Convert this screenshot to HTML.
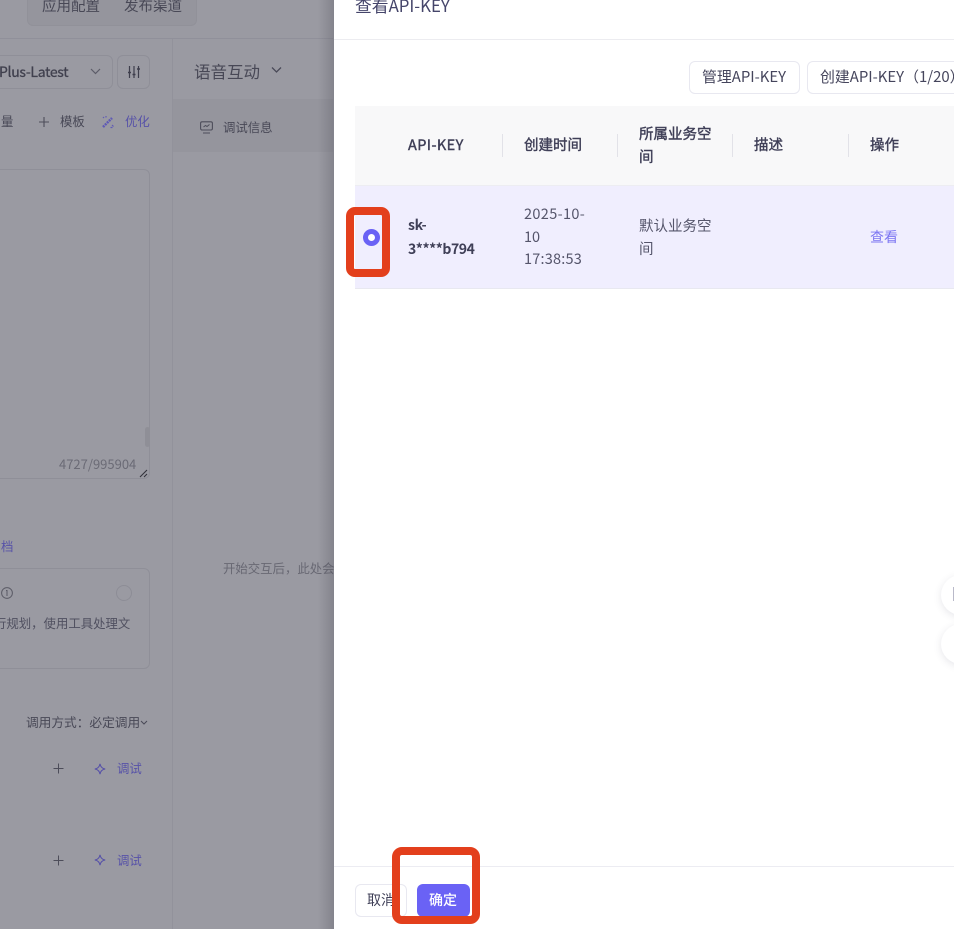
<!DOCTYPE html>
<html lang="zh-CN">
<head>
<meta charset="utf-8">
<style>
html,body{margin:0;padding:0;}
body{width:954px;height:929px;overflow:hidden;position:relative;background:#99999f;font-family:"Liberation Sans","Noto Sans CJK SC",sans-serif;}
#w{position:absolute;left:0;top:0;width:954px;height:929px;overflow:hidden;background:#9a9aa2;filter:blur(.35px);}
.t{position:absolute;white-space:nowrap;font-family:"Noto Sans CJK SC","Liberation Sans",sans-serif;}
.b{position:absolute;box-sizing:border-box;}
svg{position:absolute;overflow:visible;}
.g{color:#484856;}
.p{color:#5752a8;}
.h{color:#3f3f57;font-size:14.5px;line-height:22px;-webkit-text-stroke:.4px #3f3f57;}
.c{color:#55556b;font-size:14.5px;line-height:22px;}
.s{font-size:12.4px;line-height:18px;}
</style>
</head>
<body>
<div id="w">
<!-- background page -->
<div class="b" style="left:27px;top:-10px;width:170px;height:36px;background:#95959d;border-radius:6px;border:1px solid #919199;"></div>
<div class="t g" style="left:42px;top:-4px;font-size:14.5px;line-height:20px;">应用配置</div>
<div class="t g" style="left:124px;top:-4px;font-size:14.5px;line-height:20px;">发布渠道</div>
<div class="b" style="left:0;top:38px;width:333px;height:1px;background:#90909a;"></div>
<div class="b" style="left:172px;top:39px;width:1px;height:890px;background:#92929b;"></div>
<div class="b" style="left:173px;top:99px;width:160px;height:53px;background:#95959d;"></div>

<div class="b" style="left:-20px;top:55px;width:133px;height:34px;border:1px solid #8f8f98;border-radius:6px;"></div>
<div class="t" style="left:-1px;top:62px;font-size:14px;line-height:20px;color:#40404e;letter-spacing:-.3px;-webkit-text-stroke:.3px #40404e;">Plus-Latest</div>
<svg style="left:90px;top:67px" width="12" height="10" viewBox="0 0 12 10"><path d="M1 2l4.500 4.500L10 2" fill="none" stroke="#5c5c68" stroke-width="1.200"/></svg>
<div class="b" style="left:117px;top:55px;width:33px;height:34px;border:1px solid #8f8f98;border-radius:6px;"></div>
<svg style="left:127px;top:65px" width="14" height="14" viewBox="0 0 14 14"><path d="M2.500 1v12M7 1v12M11.500 1v12" stroke="#3e3e4c" stroke-width="1.200" fill="none"/><path d="M1 7.500h3M5.500 9.500h3M10 4h3" stroke="#3e3e4c" stroke-width="1.500"/></svg>

<div class="t g s" style="left:1px;top:112px;">量</div>
<svg style="left:38px;top:116px" width="12" height="12" viewBox="0 0 12 12"><path d="M1 6h10M6 1v10" stroke="#4d4d5a" stroke-width="1.100"/></svg>
<div class="t g s" style="left:60px;top:112px;">模板</div>
<svg style="left:101px;top:115px" width="14" height="14" viewBox="0 0 14 14"><path d="M2 12L11 3" stroke="#5f5ab5" stroke-width="2.500" stroke-dasharray="2 .8" fill="none"/><path d="M2 2l1 1M5 1v1.500M11 10l1.500 1.500M9.500 12.500h2" stroke="#5f5ab5" stroke-width="1.200"/></svg>
<div class="t p s" style="left:125px;top:112px;">优化</div>

<div class="t g" style="left:194px;top:59px;font-size:16.500px;line-height:24px;">语音互动</div>
<svg style="left:271px;top:66px" width="12" height="9" viewBox="0 0 12 9"><path d="M1 1.500l4.500 4.500L10 1.500" fill="none" stroke="#4a4a58" stroke-width="1.300"/></svg>
<svg style="left:200px;top:121px" width="13" height="13" viewBox="0 0 13 13"><rect x=".6" y=".8" width="11.800" height="8.200" rx="1.500" fill="none" stroke="#4d4d5a" stroke-width="1.100"/><path d="M3 12h7M3.500 6l2-1.500 1.500 1 2.500-2" fill="none" stroke="#4d4d5a" stroke-width="1"/></svg>
<div class="t g s" style="left:223px;top:118px;">调试信息</div>

<div class="b" style="left:-20px;top:169px;width:170px;height:310px;border:1px solid #8f8f98;border-radius:6px;"></div>
<div class="b" style="left:145px;top:427px;width:5px;height:20px;background:#8f8f97;border-radius:3px;"></div>
<div class="t" style="left:59px;top:455px;font-size:13px;line-height:18px;color:#6b6b76;">4727/995904</div>
<svg style="left:139px;top:469px" width="10" height="9" viewBox="0 0 10 9"><path d="M1 8L8 1M5 8l3-3" stroke="#33333c" stroke-width="1.100"/></svg>

<div class="t p s" style="left:1px;top:537px;">档</div>
<div class="t s" style="left:223px;top:559px;color:#686873;font-size:12.400px;">开始交互后，此处会</div>

<div class="b" style="left:-20px;top:568px;width:170px;height:101px;border:1px solid #8f8f98;border-radius:6px;"></div>
<svg style="left:1px;top:587px" width="12" height="12" viewBox="0 0 12 12"><circle cx="6" cy="6" r="5.400" fill="none" stroke="#5b5b66" stroke-width="1"/><path d="M6 3v6M5 3.500h1" stroke="#5b5b66" stroke-width="1"/></svg>
<div class="b" style="left:116px;top:585px;width:16px;height:16px;border:1px solid #8d8d96;border-radius:50%;"></div>
<div class="t s" style="left:-6px;top:614px;color:#505060;">行规划，使用工具处理文</div>

<div class="t g" style="left:26px;top:713px;font-size:12.700px;line-height:18px;">调用方式：必定调用</div>
<svg style="left:140px;top:720px" width="8" height="6" viewBox="0 0 8 6"><path d="M1 1l3 3 3-3" fill="none" stroke="#4a4a58" stroke-width="1"/></svg>

<svg style="left:53px;top:763px" width="11" height="11" viewBox="0 0 11 11"><path d="M.5 5.500h10M5.500.5v10" stroke="#4d4d5a" stroke-width="1"/></svg>
<svg style="left:94px;top:763px" width="12" height="12" viewBox="0 0 12 12"><path d="M6 .8C6.500 4 8 5.500 11.200 6 8 6.500 6.500 8 6 11.200 5.500 8 4 6.500.8 6 4 5.500 5.500 4 6 .8z" fill="none" stroke="#5752a8" stroke-width="1.100"/></svg>
<div class="t p s" style="left:117px;top:759px;">调试</div>
<svg style="left:53px;top:855px" width="11" height="11" viewBox="0 0 11 11"><path d="M.5 5.500h10M5.500.5v10" stroke="#4d4d5a" stroke-width="1"/></svg>
<svg style="left:94px;top:854px" width="12" height="12" viewBox="0 0 12 12"><path d="M6 .8C6.500 4 8 5.500 11.200 6 8 6.500 6.500 8 6 11.200 5.500 8 4 6.500.8 6 4 5.500 5.500 4 6 .8z" fill="none" stroke="#5752a8" stroke-width="1.100"/></svg>
<div class="t p s" style="left:117px;top:851px;">调试</div>

<!-- drawer shadow -->
<div class="b" style="left:318px;top:0;width:16px;height:929px;background:linear-gradient(to right,rgba(80,80,90,0),rgba(80,80,90,.3));"></div>

<!-- drawer -->
<div class="b" style="left:334px;top:0;width:620px;height:929px;background:#fff;"></div>
<div class="t" style="left:355px;top:-6px;font-size:16.800px;line-height:22px;color:#45456a;">查看API-KEY</div>
<div class="b" style="left:334px;top:39px;width:620px;height:1px;background:#ececf0;"></div>

<div class="b" style="left:689px;top:61px;width:111px;height:33px;border:1px solid #e8e8f0;border-radius:6px;"></div>
<div class="t" style="left:702px;top:66px;font-size:14.900px;line-height:22px;color:#45455c;">管理API-KEY</div>
<div class="b" style="left:807px;top:61px;width:170px;height:33px;border:1px solid #e8e8f0;border-radius:6px;"></div>
<div class="t" style="left:820px;top:66px;font-size:14.900px;line-height:22px;color:#45455c;">创建API-KEY（1/20）</div>

<div class="b" style="left:355px;top:106px;width:599px;height:80px;background:#f8f8f9;"></div>
<div class="b" style="left:355px;top:185px;width:599px;height:1px;background:#ededf2;"></div>
<div class="t h" style="left:408px;top:134px;letter-spacing:.4px;">API-KEY</div>
<div class="t h" style="left:524px;top:134px;">创建时间</div>
<div class="t h" style="left:639px;top:123px;">所属业务空</div>
<div class="t h" style="left:639px;top:146px;">间</div>
<div class="t h" style="left:754px;top:134px;">描述</div>
<div class="t h" style="left:870px;top:134px;">操作</div>
<div class="b" style="left:502px;top:134px;width:1px;height:23px;background:#e2e2e8;"></div>
<div class="b" style="left:617px;top:134px;width:1px;height:23px;background:#e2e2e8;"></div>
<div class="b" style="left:732px;top:134px;width:1px;height:23px;background:#e2e2e8;"></div>
<div class="b" style="left:848px;top:134px;width:1px;height:23px;background:#e2e2e8;"></div>

<div class="b" style="left:355px;top:186px;width:599px;height:103px;background:#f0eefe;border-bottom:1px solid #e8e8f0;"></div>
<div class="b" style="left:363px;top:229px;width:17px;height:17px;border-radius:50%;border:5px solid #6a62f5;background:#fff;"></div>
<div class="t h" style="left:408px;top:214px;font-size:14px;letter-spacing:-.35px;font-weight:700;-webkit-text-stroke:0;">sk-</div>
<div class="t h" style="left:408px;top:238px;font-size:14px;letter-spacing:-.45px;font-weight:700;-webkit-text-stroke:0;">3****b794</div>
<div class="t c" style="left:524px;top:203px;letter-spacing:.35px;">2025-10-</div>
<div class="t c" style="left:524px;top:226px;">10</div>
<div class="t c" style="left:524px;top:248px;letter-spacing:.2px;">17:38:53</div>
<div class="t c" style="left:639px;top:215px;">默认业务空</div>
<div class="t c" style="left:639px;top:238px;">间</div>
<div class="t" style="left:870px;top:226px;font-size:14px;line-height:22px;color:#7c75f2;">查看</div>

<!-- floating circles -->
<div class="b" style="left:941px;top:575px;width:40px;height:40px;border-radius:50%;background:#fff;box-shadow:0 2px 8px rgba(60,60,90,.13);"></div>
<div class="b" style="left:953px;top:587px;width:1px;height:14px;background:#b9b9c9;"></div>
<div class="b" style="left:941px;top:624px;width:40px;height:40px;border-radius:50%;background:#fff;box-shadow:0 2px 8px rgba(60,60,90,.13);"></div>

<!-- footer -->
<div class="b" style="left:334px;top:866px;width:620px;height:1px;background:#ececf2;"></div>
<div class="b" style="left:355px;top:884px;width:52px;height:33px;border:1px solid #e8e8f0;border-radius:6px;background:#fff;"></div>
<div class="t" style="left:367px;top:889px;font-size:14px;line-height:22px;color:#3f3f57;">取消</div>
<div class="b" style="left:417px;top:884px;width:53px;height:33px;border-radius:6px;background:#6a62f5;"></div>
<div class="t" style="left:429px;top:889px;font-size:14px;line-height:22px;color:#fff;font-weight:500;">确定</div>

<!-- annotations -->
<div class="b" style="left:346px;top:207px;width:44px;height:70px;border:8px solid #e33f1c;border-radius:9px;"></div>
<div class="b" style="left:392px;top:847px;width:88px;height:77px;border:8px solid #e33f1c;border-radius:10px;"></div>
</div>
</body>
</html>
